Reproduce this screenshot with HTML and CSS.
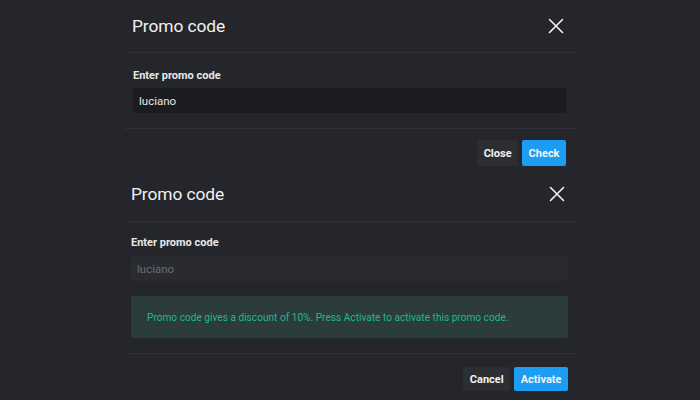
FILE: index.html
```html
<!DOCTYPE html>
<html lang="en">
<head>
<meta charset="utf-8">
<title>Promo code</title>
<link rel="stylesheet" href="styles.css">
</head>
<body>
<div class="page">
  <section class="modal modal-check">
    <header class="modal-header">
      <h2 class="modal-title">Promo code</h2>
      <button class="icon-close" aria-label="Close">
        <svg width="16" height="16" viewBox="0 0 16 16"><path d="M1.5 1.5 L14.5 14.5 M14.5 1.5 L1.5 14.5" stroke="#f2f2f2" stroke-width="1.6" stroke-linecap="round" fill="none"/></svg>
      </button>
    </header>
    <div class="modal-body">
      <label class="field-label">Enter promo code</label>
      <div class="input">luciano</div>
    </div>
    <footer class="modal-footer">
      <button class="btn btn-gray">Close</button>
      <button class="btn btn-blue">Check</button>
    </footer>
  </section>

  <section class="modal modal-activate">
    <header class="modal-header">
      <h2 class="modal-title">Promo code</h2>
      <button class="icon-close" aria-label="Close">
        <svg width="16" height="16" viewBox="0 0 16 16"><path d="M1.5 1.5 L14.5 14.5 M14.5 1.5 L1.5 14.5" stroke="#f2f2f2" stroke-width="1.6" stroke-linecap="round" fill="none"/></svg>
      </button>
    </header>
    <div class="modal-body">
      <label class="field-label">Enter promo code</label>
      <div class="input input-disabled">luciano</div>
      <div class="alert">Promo code gives a discount of 10%. Press Activate to activate this promo code.</div>
    </div>
    <footer class="modal-footer">
      <button class="btn btn-gray">Cancel</button>
      <button class="btn btn-blue">Activate</button>
    </footer>
  </section>
</div>
</body>
</html>
```

FILE: styles.css
```css
* { box-sizing: border-box; }
html, body {
  margin: 0;
  padding: 0;
  background: #25262b;
  font-family: Roboto, "Liberation Sans", Arial, sans-serif;
  color: #e9e9ea;
}
.page {
  width: 700px;
  height: 400px;
  overflow: hidden;
  display: flex;
  flex-direction: column;
  align-items: flex-start;
  padding-left: 124px;
}
.modal {
  width: 452px;
  display: flex;
  flex-direction: column;
}
.modal-header {
  display: flex;
  align-items: center;
  justify-content: space-between;
  border-bottom: 1px solid #2f3035;
}
.modal-check .modal-header { height: 53px; padding: 0 12px 0 8px; }
.modal-activate .modal-header { height: 56px; padding: 0 11px 0 7px; }
.modal-title {
  margin: 0;
  font-size: 17.4px;
  font-weight: 400;
  color: #f1f1f2;
  letter-spacing: -0.1px;
}
.icon-close {
  background: none;
  border: 0;
  padding: 0;
  width: 16px;
  height: 16px;
  display: flex;
}
.modal-body {
  display: flex;
  flex-direction: column;
  border-bottom: 1px solid #2f3035;
}
.modal-check .modal-body { padding: 16px 10px 15px 9px; }
.modal-activate .modal-body { padding: 14px 8px 15px 7px; }
.field-label {
  font-size: 11px;
  line-height: 14px;
  font-weight: 700;
  color: #e8e8e9;
}
.input {
  height: 25px;
  margin-top: 5px;
  padding: 0 6px;
  display: flex;
  align-items: center;
  background: #1b1c20;
  border-radius: 2px;
  font-size: 11.5px;
  color: #e6e6e7;
}
.input-disabled {
  margin-top: 6px;
  background: #2a2b30;
  color: #6c6d73;
}
.alert {
  margin-top: 15px;
  height: 42px;
  padding: 0 16px;
  display: flex;
  align-items: center;
  background: #2b3c3b;
  border-radius: 2px;
  font-size: 10.15px;
  color: #1fb98c;
}
.modal-footer {
  display: flex;
  justify-content: flex-end;
  gap: 4px;
}
.modal-check .modal-footer { padding: 11px 10px 0 0; }
.modal-activate .modal-footer { padding: 13px 8px 0 0; }
.btn {
  border: 0;
  border-radius: 2px;
  font-family: Roboto, "Liberation Sans", Arial, sans-serif;
  font-size: 11px;
  font-weight: 700;
  color: #f4f4f5;
  padding: 0 6.5px;
}
.modal-check .btn { height: 26px; }
.modal-activate .btn { height: 24px; }
.btn-gray { background: #2c2e33; }
.btn-blue { background: #1c9cf2; }
```
